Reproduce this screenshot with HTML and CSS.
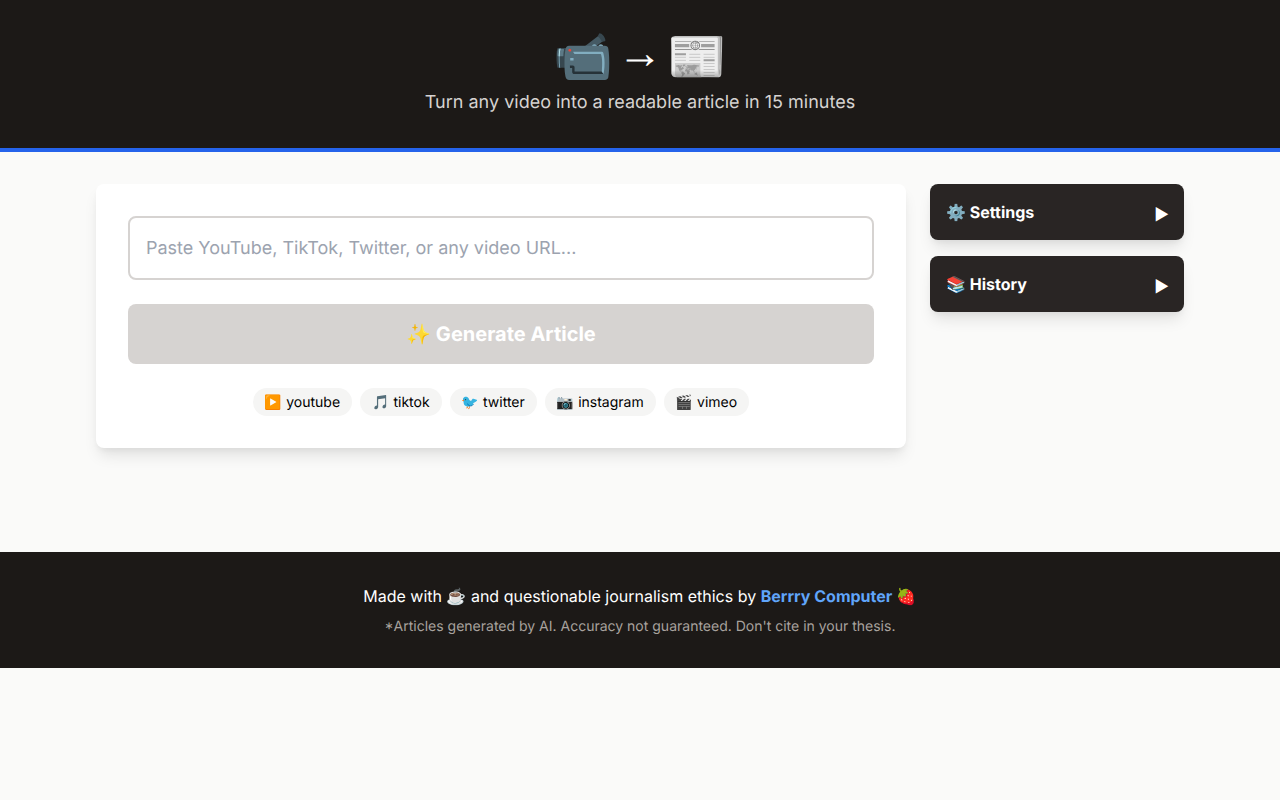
FILE: index.html
```html
<!DOCTYPE html>
<html lang="en">
<head>
<meta charset="utf-8">
<title>Video to Article</title>
<link rel="stylesheet" href="styles.css">
</head>
<body>
<header class="hero">
  <h1 class="hero-title">📹 <span class="hero-arrow">→</span> 📰</h1>
  <p class="hero-sub">Turn any video into a readable article in 15 minutes</p>
</header>
<main class="layout">
  <section class="card">
    <input class="url-input" type="text" placeholder="Paste YouTube, TikTok, Twitter, or any video URL...">
    <button class="generate" type="button">✨ Generate Article</button>
    <div class="chips">
      <span class="chip">▶️ youtube</span>
      <span class="chip">🎵 tiktok</span>
      <span class="chip">🐦 twitter</span>
      <span class="chip">📷 instagram</span>
      <span class="chip">🎬 vimeo</span>
    </div>
  </section>
  <aside class="side">
    <div class="panel"><span>⚙️ Settings</span><span class="arrow">▶</span></div>
    <div class="panel"><span>📚 History</span><span class="arrow">▶</span></div>
  </aside>
</main>
<footer class="foot">
  <p class="foot-main">Made with ☕ and questionable journalism ethics by <a class="foot-link" href="#">Berrry Computer</a> 🍓</p>
  <p class="foot-note"><span class="star">*</span>Articles generated by AI. Accuracy not guaranteed. Don't cite in your thesis.</p>
</footer>
</body>
</html>
```
FILE: styles.css
```css
* { box-sizing: border-box; }
html, body { margin: 0; padding: 0; }
body {
  background: #fafaf9;
  color: #1c1917;
  font-family: Inter, "Noto Sans", sans-serif;
  line-height: 1.5;
  text-rendering: geometricPrecision;
}
.hero {
  background: #1c1917;
  border-bottom: 4px solid #2563eb;
  color: #fff;
  height: 152px;
  padding-top: 32px;
  text-align: center;
}
.hero-title {
  height: 48px;
  margin: 0 0 8px;
  font-size: 48px;
  font-weight: 400;
  line-height: 48px;
  word-spacing: -9px;
}
.hero-arrow {
  font-family: "Liberation Sans", sans-serif;
  font-size: 45px;
  line-height: 0;
  vertical-align: 5px;
}
.hero-sub {
  margin: 0;
  font-size: 18px;
  line-height: 29px;
  height: 28px;
  color: #d6d3d1;
}
.layout {
  display: grid;
  grid-template-columns: minmax(0, 1fr) 254px;
  gap: 24px;
  align-items: start;
  width: 1088px;
  margin: 0 auto;
  padding: 32px 0 104px;
}
.card {
  background: #fff;
  border-radius: 8px;
  padding: 32px;
  box-shadow: 0 10px 15px -3px rgba(0, 0, 0, 0.1), 0 4px 6px -2px rgba(0, 0, 0, 0.05);
}
.url-input {
  display: block;
  width: 100%;
  height: 64px;
  padding: 0 16px;
  border: 2px solid #d6d3d1;
  border-radius: 8px;
  background: #fff;
  font: 18px Inter, sans-serif;
  color: #1c1917;
  text-rendering: geometricPrecision;
}
.url-input::placeholder { color: #9ca3af; opacity: 1; }
.generate {
  display: block;
  width: 100%;
  height: 60px;
  margin-top: 24px;
  border: 0;
  border-radius: 8px;
  background: #d6d3d1;
  color: #fff;
  font: 700 20px Inter, sans-serif;
  text-rendering: geometricPrecision;
}
.chips {
  display: flex;
  justify-content: center;
  gap: 8px;
  margin-top: 24px;
}
.chip {
  height: 28px;
  padding: 0 12px;
  border-radius: 14px;
  background: #f5f5f4;
  font-size: 14px;
  line-height: 29px;
  color: #000;
}
.side {
  display: flex;
  flex-direction: column;
  gap: 16px;
}
.panel {
  display: flex;
  justify-content: space-between;
  align-items: center;
  height: 56px;
  padding: 0 16px;
  border-radius: 8px;
  background: #292524;
  color: #fff;
  font-size: 16px;
  font-weight: 700;
  box-shadow: 0 10px 15px -3px rgba(0, 0, 0, 0.1), 0 4px 6px -2px rgba(0, 0, 0, 0.05);
}
.arrow {
  margin: 3px -1px 0 0;
  font-weight: 400;
}
.foot {
  background: #1c1917;
  color: #fff;
  height: 116px;
  padding-top: 32px;
  text-align: center;
}
.foot-main {
  margin: 0 0 8px;
  font-size: 16px;
  line-height: 24px;
}
.foot-link {
  color: #60a5fa;
  font-weight: 700;
  text-decoration: none;
}
.foot-note {
  margin: 0;
  font-size: 14px;
  line-height: 21px;
  height: 20px;
  color: #a8a29e;
}
.star {
  font-feature-settings: "case" 1;
}
```
